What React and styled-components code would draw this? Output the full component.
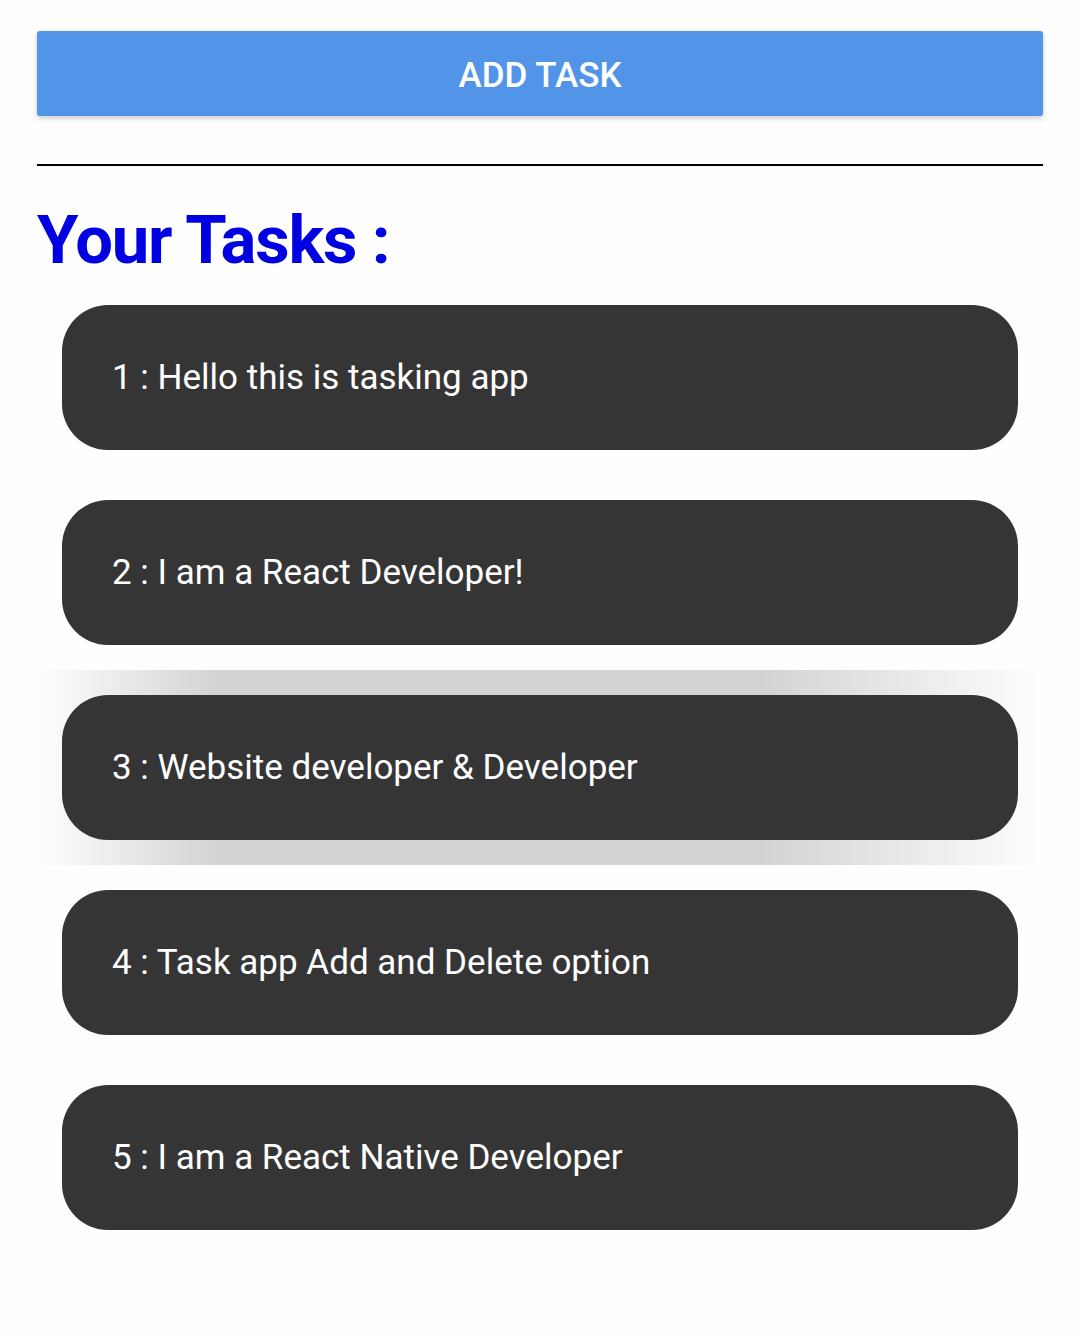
import React from 'react'
import styled, { createGlobalStyle } from 'styled-components'

const tasks = [
  'Hello this is tasking app',
  'I am a React Developer!',
  'Website developer & Developer',
  'Task app Add and Delete option',
  'I am a React Native Developer',
]

const App = () => {
  return (
    <Page>
      <Global />
      <AddButton>ADD TASK</AddButton>
      <Divider />
      <Heading>Your Tasks :</Heading>
      <List>
        {tasks.map((t, i) => (
          <Item key={i} pressed={i === 2}>
            <Card>
              <CardText>{i + 1} : {t}</CardText>
            </Card>
          </Item>
        ))}
      </List>
    </Page>
  )
}

const Global = createGlobalStyle`
body {
  margin: 0;
  background: #fefefe;
  font-family: Roboto, "Noto Sans", sans-serif;
}
`

const Page = styled.div`
width: 1080px;
min-height: 1336px;
padding: 31px 37px 0;
box-sizing: border-box;
display: flex;
flex-direction: column;
`

const AddButton = styled.div`
height: 85px;
padding-top: 3px;
box-sizing: border-box;
background: #5294e8;
border-radius: 3px;
box-shadow: 0 2px 5px rgba(0,0,0,0.22);
display: flex;
justify-content: center;
align-items: center;
color: #ffffff;
font-size: 35px;
font-weight: 500;
`

const Divider = styled.div`
height: 2px;
background: #000;
margin-top: 48px;
`

const Heading = styled.h1`
margin: 34px 0 0;
color: #0000e0;
font-size: 67px;
font-weight: 700;
line-height: 80px;
letter-spacing: -1.2px;
`

const List = styled.div`
margin-top: 25px;
display: flex;
flex-direction: column;
`

const Item = styled.div`
padding: 25px;
margin-top: -25px;
background: ${p => p.pressed
  ? 'linear-gradient(90deg, rgba(211,211,211,0) 0%, #d3d3d3 18%, #d3d3d3 72%, rgba(211,211,211,0) 100%)'
  : 'transparent'};
& + & { margin-top: 0; }
`

const Card = styled.div`
height: 145px;
background: #353535;
border-radius: 46px;
display: flex;
align-items: center;
padding-left: 50px;
`

const CardText = styled.span`
color: #ffffff;
font-size: 35px;
font-weight: 400;
`

export default App
